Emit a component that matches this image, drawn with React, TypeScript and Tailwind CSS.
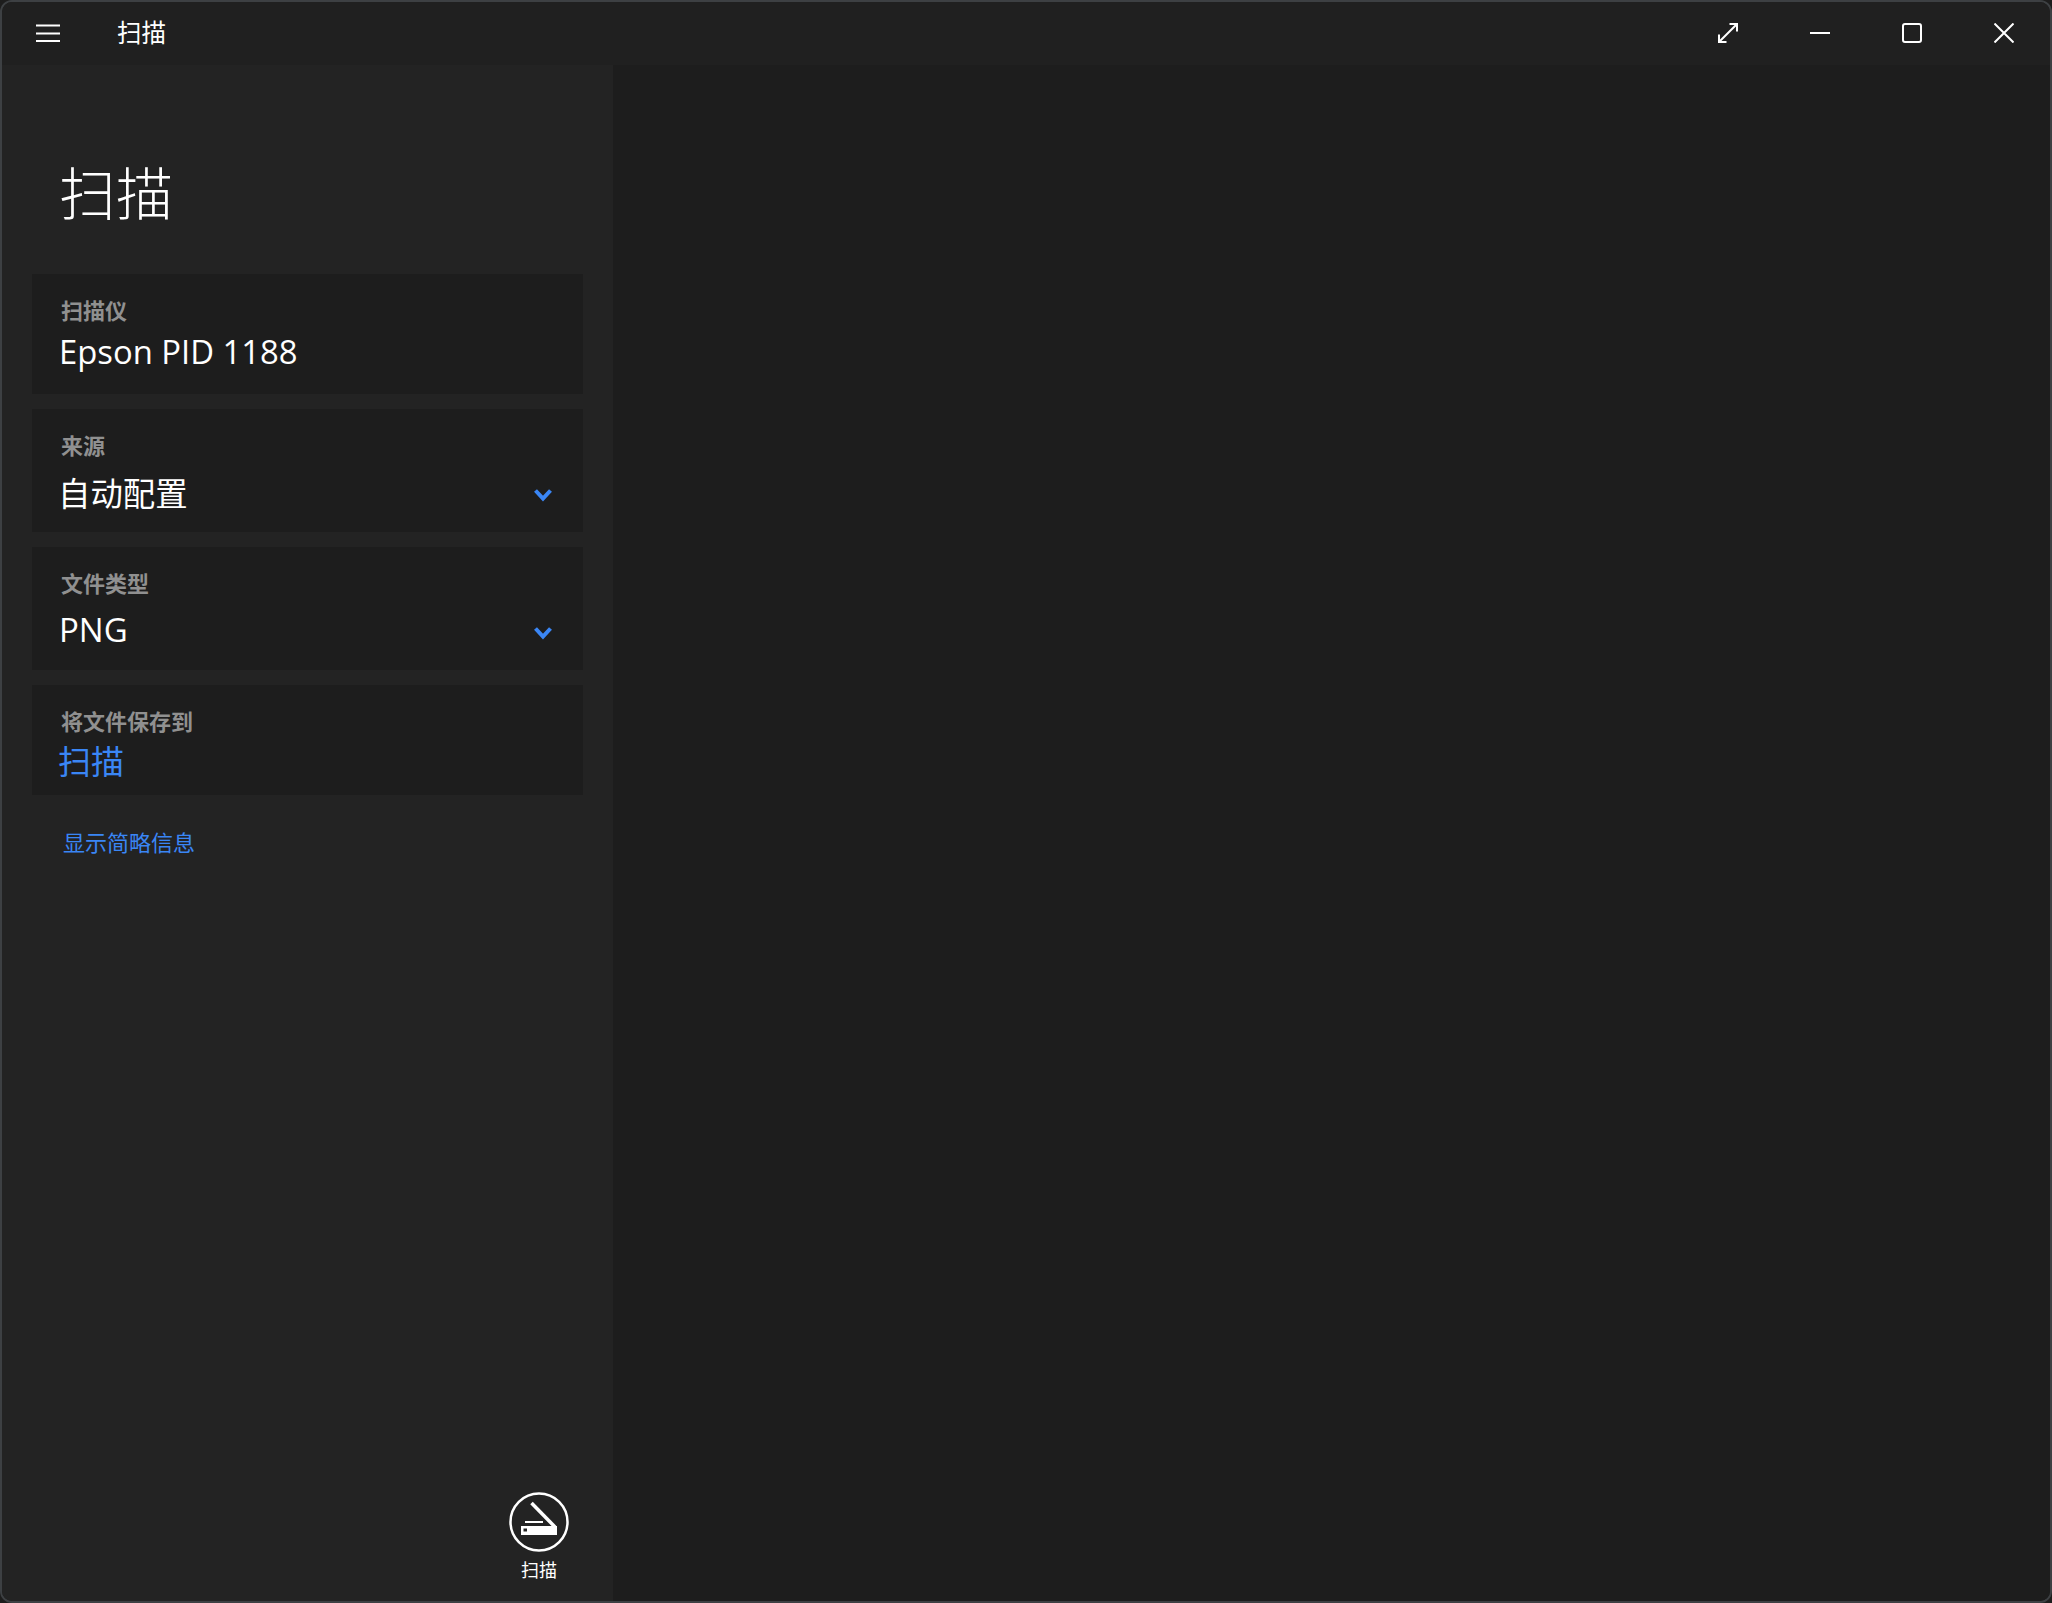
const cjk = "font-['Segoe_UI','Open_Sans','Noto_Sans_CJK_SC',sans-serif]";

function Chevron() {
  return (
    <svg width="18" height="14" viewBox="0 0 18 14" className="mt-[15px]">
      <path d="M1.5 2.5 L9 10.5 L16.5 2.5" fill="none" stroke="#3a86f5" strokeWidth="4" />
    </svg>
  );
}

function Card({ label, h, children, right }: { label: string; h: string; children: React.ReactNode; right?: React.ReactNode }) {
  return (
    <div className={`${h} bg-[#1d1d1d] pl-[28px] pr-[31px] flex flex-col`}>
      <div className="text-[22px] leading-[30px] font-bold text-[#909090] mt-[21px] ml-[1px]">{label}</div>
      <div className="flex items-center justify-between">
        {children}
        {right}
      </div>
    </div>
  );
}

export default function App() {
  return (
    <div className={`w-[2052px] h-[1603px] bg-[#1d1d1d] overflow-hidden ${cjk}`}>
      <div className="h-full flex flex-col border-2 border-[#3d4043] rounded-[12px] overflow-hidden text-white">
        <header className="h-[63px] shrink-0 bg-[#202020] flex items-center pb-[2px]">
          <svg width="24" height="20" viewBox="0 0 24 20" className="ml-[34px]">
            <path d="M0 2.5H24M0 10.5H24M0 18H24" stroke="#fff" strokeWidth="2" />
          </svg>
          <div className="ml-[57px] text-[24.5px] leading-[32px]">扫描</div>
          <div className="ml-auto flex items-center">
            <svg width="22" height="22" viewBox="0 0 22 22" className="mr-[71px]">
              <path d="M2 20L20 2M12.5 2H20V9.5M2 12.5V20H9.5" fill="none" stroke="#fff" strokeWidth="2" />
            </svg>
            <div className="w-[20px] h-[2px] bg-white mr-[72px]" />
            <div className="w-[20px] h-[20px] border-2 border-white rounded-[3px] mr-[72px]" />
            <svg width="20" height="20" viewBox="0 0 20 20" className="mr-[36px]">
              <path d="M0.5 0.5L19.5 19.5M19.5 0.5L0.5 19.5" stroke="#fff" strokeWidth="2" />
            </svg>
          </div>
        </header>
        <div className="flex-1 flex min-h-0">
          <aside className="w-[611px] shrink-0 bg-[#232323] flex flex-col pl-[30px] pr-[30px]">
            <h1 className="text-[57px] leading-[76px] font-light pl-[27px] mt-[90px] mb-[43px]">扫描</h1>
            <div className="flex flex-col gap-[15px]">
              <Card label="扫描仪" h="h-[120px]">
                <div className="text-[32.8px] leading-[44px] mt-[5px] ml-[-1px]">Epson PID 1188</div>
              </Card>
              <Card label="来源" h="h-[123px]" right={<Chevron />}>
                <div className="text-[32.4px] leading-[44px] mt-[11px] ml-[-2px]">自动配置</div>
              </Card>
              <Card label="文件类型" h="h-[123px]" right={<Chevron />}>
                <div className="text-[33px] leading-[44px] mt-[10px] ml-[-1px]">PNG</div>
              </Card>
              <Card label="将文件保存到" h="h-[110px]">
                <div className="text-[33px] leading-[44px] mt-[4px] ml-[-2px] text-[#3a86f5]">扫描</div>
              </Card>
            </div>
            <div className="text-[22px] leading-[30px] text-[#3a86f5] pl-[31px] mt-[32px]">显示简略信息</div>
            <div className="mt-auto ml-auto mr-[8px] mb-[19px] w-[72px] flex flex-col items-center">
              <svg width="60" height="60" viewBox="0 0 60 60">
                <circle cx="30" cy="30" r="28.5" fill="none" stroke="#fff" strokeWidth="2.5" />
                <path d="M22.5 11L46 35" stroke="#fff" strokeWidth="3.5" />
                <path d="M16 30H34" stroke="#fff" strokeWidth="2" />
                <path fillRule="evenodd" d="M12 34H48V43H12ZM14.5 36.5V39.5H18V36.5Z" fill="#fff" />
              </svg>
              <div className="text-[18px] leading-[24px] mt-[6px]">扫描</div>
            </div>
          </aside>
          <main className="flex-1 bg-[#1d1d1d]" />
        </div>
      </div>
    </div>
  );
}
